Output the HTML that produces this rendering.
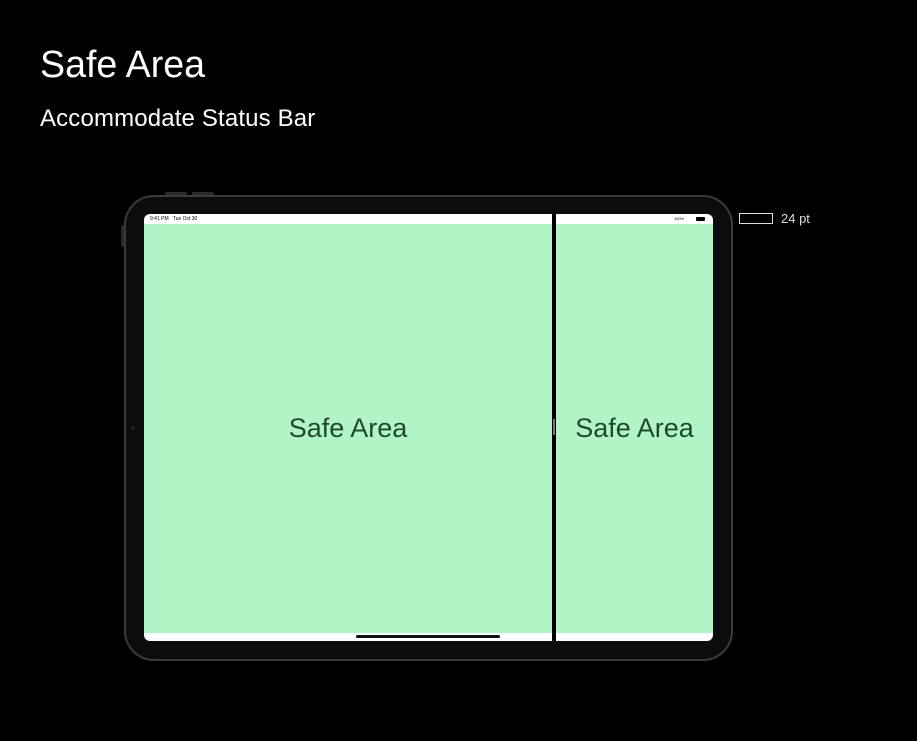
<!DOCTYPE html>
<html><head><meta charset="utf-8"><style>
*{margin:0;padding:0;box-sizing:border-box}
body{width:917px;height:741px;background:#000;position:relative;overflow:hidden;font-family:"Liberation Sans",sans-serif;color:#fff}
.a{position:absolute}
</style></head><body>
<div class="a" style="left:40px;top:42px;font-size:37.6px;line-height:44px">Safe Area</div>
<div class="a" style="left:40px;top:105px;font-size:24px;line-height:28px;letter-spacing:0.15px">Accommodate Status Bar</div>
<div class="a" style="left:165px;top:192px;width:22px;height:4px;background:#2a2a2a;border-radius:2px"></div>
<div class="a" style="left:192px;top:192px;width:22px;height:4px;background:#2a2a2a;border-radius:2px"></div>
<div class="a" style="left:121px;top:225px;width:4px;height:22px;background:#2a2a2a;border-radius:2px"></div>
<div class="a" style="left:124px;top:195px;width:609px;height:466px;background:#0c0c0c;border:2px solid #3b3b3b;border-radius:30px"></div>
<div class="a" style="left:131px;top:426px;width:4px;height:4px;background:#222;border-radius:50%"></div>
<div class="a" style="left:144px;top:214px;width:569px;height:427px;background:#fff;border-radius:6px;overflow:hidden">
  <div class="a" style="left:0;top:10px;width:569px;height:409px;background:#b1f5c7"></div>
  <div class="a" style="left:408px;top:0;width:4px;height:427px;background:#000"></div>
  <div class="a" style="left:409px;top:205px;width:2px;height:16px;background:#777"></div>
  <div class="a" style="left:6px;top:2px;font-size:5px;color:#000">9:41 PM&nbsp;&nbsp;&nbsp;Tue Oct 30</div>
  <div class="a" style="left:530px;top:2px;font-size:4px;color:#000">100%</div>
  <div class="a" style="left:552px;top:3px;width:9px;height:4px;background:#000;border-radius:1px"></div>
  <div class="a" style="left:212px;top:421px;width:144px;height:3px;background:#111;border-radius:2px"></div>
  <div class="a" style="left:0;top:199px;width:408px;text-align:center;font-size:27px;color:#1f4a2c">Safe Area</div>
  <div class="a" style="left:412px;top:199px;width:157px;text-align:center;font-size:27px;color:#1f4a2c">Safe Area</div>
</div>
<div class="a" style="left:739px;top:213px;width:34px;height:11px;border:1px solid #ddd"></div>
<div class="a" style="left:781px;top:211px;font-size:13px;color:#ddd">24 pt</div>
</body></html>
